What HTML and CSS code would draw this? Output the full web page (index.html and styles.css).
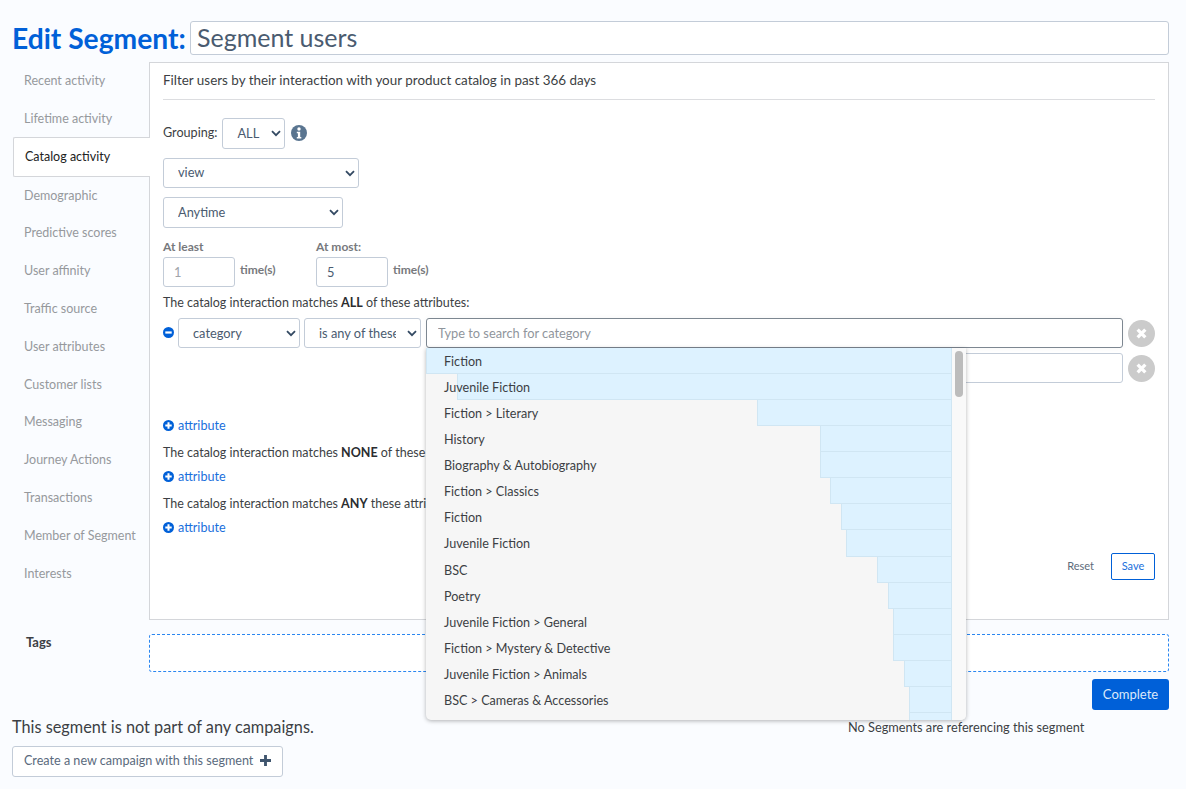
FILE: index.html
```html
<!DOCTYPE html>
<html lang="en">
<head>
    <meta charset="UTF-8">
    <title>Edit Segment</title>
    <link rel="stylesheet" href="styles.css">
</head>
<body>

<div class="title-row">
    <h1>Edit Segment:</h1>
    <input class="title-input" type="text" value="Segment users">
</div>

<div class="editor">
    <ul class="side-nav">
        <li>Recent activity</li>
        <li>Lifetime activity</li>
        <li class="active">Catalog activity</li>
        <li>Demographic</li>
        <li>Predictive scores</li>
        <li>User affinity</li>
        <li>Traffic source</li>
        <li>User attributes</li>
        <li>Customer lists</li>
        <li>Messaging</li>
        <li>Journey Actions</li>
        <li>Transactions</li>
        <li>Member of Segment</li>
        <li>Interests</li>
    </ul>

    <div class="panel">
        <p class="panel-title">Filter users by their interaction with your product catalog in past 366 days</p>

        <div class="grouping">
            <label>Grouping:</label>
            <select class="field select-all"><option>ALL</option></select>
            <svg class="info-icon" viewBox="0 0 16 16" width="16" height="16">
                <circle cx="8" cy="8" r="8" fill="#5a7590"/>
                <circle cx="8" cy="4" r="1.7" fill="#fff"/>
                <path d="M5.8 6.7h3.4v5.2h1.1v1.6H5.8v-1.6h1.1V8.3H5.8z" fill="#fff"/>
            </svg>
        </div>

        <select class="field select-action"><option>view</option></select>
        <select class="field select-time"><option>Anytime</option></select>

        <div class="counts">
            <div class="count">
                <label>At least</label>
                <div class="count-line">
                    <input class="field count-input muted" type="text" value="1">
                    <span>time(s)</span>
                </div>
            </div>
            <div class="count">
                <label>At most:</label>
                <div class="count-line">
                    <input class="field count-input" type="text" value="5">
                    <span>time(s)</span>
                </div>
            </div>
        </div>

        <p class="match-line first">The catalog interaction matches <b>ALL</b> of these attributes:</p>

        <div class="attr-row">
            <svg class="round-icon" viewBox="0 0 12 12" width="11" height="11">
                <circle cx="6" cy="6" r="6" fill="#0060d8"/>
                <rect x="2.5" y="4.8" width="7" height="2.4" fill="#fff"/>
            </svg>
            <select class="field select-attr"><option>category</option></select>
            <select class="field select-op"><option>is any of these</option></select>
            <div class="search-box">
                <input class="field search-input" type="text" placeholder="Type to search for category">
                <div class="dropdown">
                    <div class="dropdown-list">
                        <div class="option"><span class="bar" style="width:526px"></span><span class="option-text">Fiction</span></div>
                        <div class="option"><span class="bar" style="width:495px"></span><span class="option-text">Juvenile Fiction</span></div>
                        <div class="option"><span class="bar" style="width:195px"></span><span class="option-text">Fiction &gt; Literary</span></div>
                        <div class="option"><span class="bar" style="width:132px"></span><span class="option-text">History</span></div>
                        <div class="option"><span class="bar" style="width:132px"></span><span class="option-text">Biography &amp; Autobiography</span></div>
                        <div class="option"><span class="bar" style="width:122px"></span><span class="option-text">Fiction &gt; Classics</span></div>
                        <div class="option"><span class="bar" style="width:111px"></span><span class="option-text">Fiction</span></div>
                        <div class="option"><span class="bar" style="width:106px"></span><span class="option-text">Juvenile Fiction</span></div>
                        <div class="option"><span class="bar" style="width:75px"></span><span class="option-text">BSC</span></div>
                        <div class="option"><span class="bar" style="width:64px"></span><span class="option-text">Poetry</span></div>
                        <div class="option"><span class="bar" style="width:59px"></span><span class="option-text">Juvenile Fiction &gt; General</span></div>
                        <div class="option"><span class="bar" style="width:59px"></span><span class="option-text">Fiction &gt; Mystery &amp; Detective</span></div>
                        <div class="option"><span class="bar" style="width:48px"></span><span class="option-text">Juvenile Fiction &gt; Animals</span></div>
                        <div class="option"><span class="bar" style="width:43px"></span><span class="option-text">BSC &gt; Cameras &amp; Accessories</span></div>
                        <div class="option"><span class="bar" style="width:43px"></span><span class="option-text"></span></div>
                    </div>
                    <div class="scroll-track"><div class="scroll-thumb"></div></div>
                </div>
            </div>
            <button class="remove-btn"><svg viewBox="0 0 10 10" width="11" height="11"><path d="M1.500 1.500l7 7M8.500 1.500l-7 7" stroke="#fff" stroke-width="3"/></svg></button>
        </div>
        <div class="attr-row second">
            <input class="field value-input" type="text">
            <button class="remove-btn"><svg viewBox="0 0 10 10" width="11" height="11"><path d="M1.500 1.500l7 7M8.500 1.500l-7 7" stroke="#fff" stroke-width="3"/></svg></button>
        </div>

        <a class="add-attr first-add"><svg class="round-icon" viewBox="0 0 12 12" width="11" height="11"><circle cx="6" cy="6" r="6" fill="#0060d8"/><path d="M4.900 2.500h2.200v2.400h2.400v2.200H7.100v2.400H4.900V7.100H2.500V4.900h2.400z" fill="#fff"/></svg>attribute</a>
        <p class="match-line">The catalog interaction matches <b>NONE</b> of these attributes:</p>
        <a class="add-attr"><svg class="round-icon" viewBox="0 0 12 12" width="11" height="11"><circle cx="6" cy="6" r="6" fill="#0060d8"/><path d="M4.900 2.500h2.200v2.400h2.400v2.200H7.100v2.400H4.900V7.100H2.500V4.900h2.400z" fill="#fff"/></svg>attribute</a>
        <p class="match-line">The catalog interaction matches <b>ANY</b> these attributes:</p>
        <a class="add-attr"><svg class="round-icon" viewBox="0 0 12 12" width="11" height="11"><circle cx="6" cy="6" r="6" fill="#0060d8"/><path d="M4.900 2.500h2.200v2.400h2.400v2.200H7.100v2.400H4.900V7.100H2.500V4.900h2.400z" fill="#fff"/></svg>attribute</a>

        <div class="panel-actions">
            <a class="reset-link">Reset</a>
            <button class="save-btn">Save</button>
        </div>
    </div>
</div>

<div class="tags-row">
    <div class="tags-label">Tags</div>
    <div class="tags-box"></div>
</div>

<div class="complete-row">
    <button class="complete-btn">Complete</button>
</div>

<div class="bottom-row">
    <div class="campaigns">
        <p>This segment is not part of any campaigns.</p>
        <button class="create-btn">Create a new campaign with this segment
            <svg viewBox="0 0 10 10" width="11" height="11"><path d="M3.700 0h2.600v3.700H10v2.600H6.300V10H3.700V6.300H0V3.700h3.700z" fill="#3f556e"/></svg>
        </button>
    </div>
    <p class="no-refs">No Segments are referencing this segment</p>
</div>

</body>
</html>
```

FILE: styles.css
```css
* {
    box-sizing: border-box;
}
body {
    margin: 0;
    padding: 21px 17px 0 12px;
    background-color: #fafcff;
    font-family: Lato, "Open Sans", sans-serif;
    font-size: 12.6px;
    color: #3c3f44;
    overflow: hidden;
    height: 789px;
}
p {
    margin: 0;
}
button {
    font-family: inherit;
    cursor: pointer;
}
.title-row {
    display: flex;
    align-items: center;
    gap: 4px;
    height: 34px;
}
h1 {
    margin: 0;
    font-size: 28.2px;
    font-weight: 700;
    line-height: 34px;
    color: #0060d8;
    white-space: nowrap;
    width: 174px;
    flex-shrink: 0;
}
.title-input {
    flex: 1;
    height: 34px;
    border: 1px solid #c3ccd8;
    border-radius: 3px;
    background-color: #fff;
    padding: 0 6px 2px;
    font-family: inherit;
    font-size: 25px;
    color: #4a5b70;
}
.editor {
    display: flex;
    margin-top: 7px;
}
.side-nav {
    list-style: none;
    margin: 0;
    padding: 0;
    width: 137px;
    flex-shrink: 0;
}
.side-nav li {
    height: 37.8px;
    line-height: 37.5px;
    padding-left: 12px;
    font-size: 12.5px;
    color: #96999d;
    white-space: nowrap;
}
.side-nav li.active {
    height: 40px;
    line-height: 37px;
    margin: -1px -1px 0 1px;
    padding-left: 11px;
    width: 137px;
    position: relative;
    background-color: #fff;
    border: 1px solid #d4d6da;
    border-right: none;
    border-radius: 2px 0 0 2px;
    color: #222;
}
.panel {
    flex: 1;
    height: 558px;
    background-color: #fff;
    border: 1px solid #d4d6da;
    padding: 0 13px;
}
.panel-title {
    font-size: 13.43px;
    line-height: 35px;
    height: 37px;
    border-bottom: 1px solid #dcdde0;
}
.grouping {
    display: flex;
    align-items: center;
    margin-top: 18px;
    height: 31px;
}
.grouping label {
    margin: -2px 5px 0 0;
}
.field {
    display: block;
    border: 1px solid #c3ccd8;
    border-radius: 3px;
    background-color: #fff;
    font-family: inherit;
    font-size: 12.8px;
    color: #4a5b70;
    outline: none;
}
select.field {
    appearance: none;
    padding: 0 24px 2px 14px;
    background-image: url("data:image/svg+xml,%3Csvg xmlns='http://www.w3.org/2000/svg' width='10' height='7'%3E%3Cpath d='M1 1.200l4 4 4-4' fill='none' stroke='%23344a63' stroke-width='1.800'/%3E%3C/svg%3E");
    background-repeat: no-repeat;
    background-position: right 3px center;
}
.select-all {
    width: 63px;
    height: 31px;
}
.info-icon {
    margin: -2px 0 0 6px;
}
.select-action {
    width: 196px;
    height: 30px;
    margin-top: 9px;
}
.select-time {
    width: 180px;
    height: 31px;
    margin-top: 9px;
}
.counts {
    display: flex;
    margin-top: 11px;
}
.count {
    width: 153px;
}
.count label {
    display: block;
    font-size: 12px;
    font-weight: 700;
    color: #77797d;
    line-height: 15px;
    margin-bottom: 3px;
}
.count-line {
    display: flex;
    gap: 5px;
    font-size: 12px;
    font-weight: 700;
    color: #77797d;
    line-height: 26px;
}
.count-input {
    width: 72px;
    height: 30px;
    padding: 0 10px;
}
.count-input.muted {
    color: #a0a4a9;
}
.match-line {
    font-size: 12.5px;
    line-height: 17px;
    height: 17px;
    margin-top: 10px;
    white-space: nowrap;
}
.match-line.first {
    margin-top: 7px;
}
.match-line b {
    color: #2b2d30;
}
.attr-row {
    display: flex;
    gap: 4px;
    height: 30px;
    margin-top: 7px;
    align-items: center;
}
.attr-row > .round-icon {
    margin: -1px 0 0;
}
.attr-row.second {
    margin-top: 5px;
    justify-content: flex-end;
}
select.select-attr,
select.select-op {
    height: 30px;
    padding-bottom: 0;
}
.select-attr {
    width: 122px;
}
.select-op {
    width: 117px;
    margin-right: 1px;
}
.search-box {
    position: relative;
    width: 697px;
    flex-shrink: 0;
}
.search-input {
    width: 100%;
    height: 30px;
    padding: 0 11px;
    border-color: #7d8791;
    box-shadow: 0 0 6px rgba(0, 0, 0, 0.04);
}
.search-input::placeholder {
    color: #8f959c;
    opacity: 1;
}
.value-input {
    width: 697px;
    height: 30px;
}
.remove-btn {
    display: flex;
    align-items: center;
    justify-content: center;
    width: 27px;
    height: 27px;
    margin-left: 1px;
    border: none;
    border-radius: 50%;
    background-color: #cbcbcb;
    padding: 0;
    flex-shrink: 0;
}
.dropdown {
    position: absolute;
    top: 30px;
    left: 0;
    width: 540px;
    height: 372px;
    display: flex;
    background-color: #f6f6f6;
    border-radius: 0 0 5px 5px;
    box-shadow: 0 1px 4px rgba(0, 0, 0, 0.3);
    overflow: hidden;
    z-index: 5;
}
.dropdown-list {
    width: 526px;
    flex-shrink: 0;
}
.option {
    position: relative;
    height: 26.07px;
    line-height: 28px;
    padding-left: 18px;
    color: #3c3f44;
}
.bar {
    position: absolute;
    top: 0;
    right: 0;
    bottom: 0;
    background-color: #ddf2ff;
    border-left: 1px solid #d0e6f3;
    border-bottom: 1px solid #d0e6f3;
    border-right: 1px solid #d0e6f3;
}
.option-text {
    position: relative;
}
.scroll-track {
    flex: 1;
    background-color: #f9f9f9;
    padding: 3px 2px 0 3px;
}
.scroll-thumb {
    width: 8px;
    height: 46px;
    border-radius: 4px;
    background-color: #bcbcbc;
}
.add-attr {
    display: flex;
    align-items: center;
    gap: 4px;
    color: #1a6fdc;
    line-height: 17px;
    height: 17px;
}
.first-add {
    margin-top: 34px;
}
.match-line + .add-attr {
    margin-top: 7px;
}
.panel-actions {
    display: flex;
    justify-content: flex-end;
    align-items: center;
    gap: 17px;
    margin-top: 17px;
}
.reset-link {
    font-size: 11px;
    color: #5d6b7b;
    margin-top: -3px;
}
.save-btn {
    width: 44px;
    height: 27px;
    padding: 0 0 3px;
    border: 1px solid #0060d8;
    border-radius: 2px;
    background-color: #fff;
    color: #1a6fdc;
    font-size: 11px;
}
.tags-row {
    display: flex;
    margin-top: 14px;
}
.tags-label {
    width: 137px;
    padding: 0 0 0 14px;
    font-weight: 700;
    font-size: 13px;
    line-height: 17px;
}
.tags-box {
    flex: 1;
    height: 38px;
    background-color: #fff;
    border: 1px dashed #2a86f0;
    border-radius: 3px;
}
.complete-row {
    display: flex;
    justify-content: flex-end;
    margin-top: 7px;
}
.complete-btn {
    width: 77px;
    height: 31px;
    padding: 0 0 2px;
    border: none;
    border-radius: 3px;
    background-color: #0060d8;
    color: #dce9fa;
    font-size: 13px;
}
.bottom-row {
    display: flex;
    margin-top: 7px;
}
.campaigns {
    width: 836px;
}
.campaigns p {
    font-size: 16.3px;
    line-height: 20px;
}
.create-btn {
    display: flex;
    align-items: center;
    gap: 7px;
    width: 271px;
    height: 31px;
    margin-top: 9px;
    padding: 0 0 3px 11px;
    border: 1px solid #c3ccd8;
    border-radius: 3px;
    background-color: #fff;
    color: #5a6a7d;
    font-size: 12.6px;
    white-space: nowrap;
}
.create-btn svg {
    margin-top: 1px;
}
.no-refs {
    font-size: 12.75px;
    line-height: 20px;
}
```
